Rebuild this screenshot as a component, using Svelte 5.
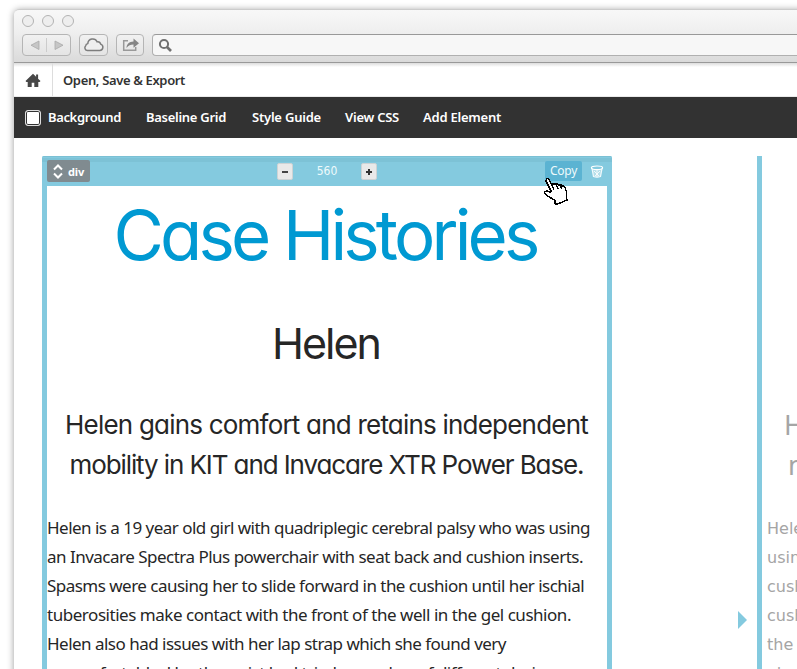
<script>
  const menu = [
    { label: 'Background', width: 73, gap: 25 },
    { label: 'Baseline Grid', width: 80, gap: 26 },
    { label: 'Style Guide', width: 69, gap: 24 },
    { label: 'View CSS', width: 54, gap: 24 },
    { label: 'Add Element', width: 78, gap: 0 }
  ];
  const intro = [
    { text: 'Helen gains comfort and retains independent', width: 523 },
    { text: 'mobility in KIT and Invacare XTR Power Base.', width: 514 }
  ];
  const story = [
    { text: 'Helen is a 19 year old girl with quadriplegic cerebral palsy who was using', width: 543 },
    { text: 'an Invacare Spectra Plus powerchair with seat back and cushion inserts.', width: 536 },
    { text: 'Spasms were causing her to slide forward in the cushion until her ischial', width: 537 },
    { text: 'tuberosities make contact with the front of the well in the gel cushion.', width: 524 },
    { text: 'Helen also had issues with her lap strap which she found very', width: 459 },
    { text: 'uncomfortable. Her therapist had tried a number of different designs', width: 516 }
  ];
  const copy = ['Helen is a 19', 'using an', 'cushion', 'cushion', 'the gel', 'also had'];

  // Tracks a line of text so that it spans the given measure.
  function fit(node, width) {
    const natural = node.getBoundingClientRect().width;
    node.style.letterSpacing = `${(width - natural) / node.textContent.length}px`;
  }
</script>

<div class="page">
  <div class="window">
    <header class="chrome">
      <div class="lights"><i></i><i></i><i></i></div>
      <div class="tools">
        <div class="btn nav">
          <svg width="47" height="20" viewBox="0 0 47 20">
            <path d="M16 6v8.5L8 10.2zM32 6v8.5l8-4.3z" fill="#c6c6c6" stroke="#a9a9a9" stroke-width=".8" />
            <path d="M23.5 3v14" stroke="#ccc" />
          </svg>
        </div>
        <div class="btn cloud">
          <svg width="27" height="20" viewBox="0 0 27 20">
            <path d="M7.500 15.500h12.300a3.300 3.300 0 0 0 .9-6.400 3.200 3.200 0 0 0-3.600-2.300 4.900 4.900 0 0 0-9.300 1.700 3 3 0 0 0-2.100 2.200 2.800 2.800 0 0 0 1.800 4.800z" fill="#eee" stroke="#7d7d7d" stroke-width="1.500" />
          </svg>
        </div>
        <div class="btn share">
          <svg width="26" height="20" viewBox="0 0 26 20">
            <path d="M11 5.700H6.700v9.600h12V12" fill="none" stroke="#999" stroke-width="1.500" />
            <path d="M9.500 13c.2-4.300 2.700-6.500 7-6.600V3.500l5.500 4.700-5.500 4.500V9.600c-3 0-5 .8-7 3.400z" fill="#858585" />
          </svg>
        </div>
        <div class="search">
          <svg width="16" height="16" viewBox="0 0 16 16">
            <circle cx="6" cy="6" r="4.100" fill="none" stroke="#707070" stroke-width="2" />
            <path d="m9 9 4 4" stroke="#707070" stroke-width="2.600" />
          </svg>
        </div>
      </div>
    </header>

    <nav class="file">
      <div class="home">
        <svg width="16" height="15" viewBox="0 0 16 15">
          <path d="M8 .8.5 8l.9.9h1.300v5h4V9.800h2.600v4.100h4v-5h1.300l.9-.9-2.400-2.300V1.500h-2v2.200z" fill="#474747" />
        </svg>
      </div>
      <span class="t open" use:fit={122}>Open, Save &amp; Export</span>
    </nav>

    <nav class="menu">
      <i class="swatch"></i>
      {#each menu as m}
        <span class="cell" style:margin-right="{m.gap}px" style:width="{m.width}px"><span class="t" use:fit={m.width}>{m.label}</span></span>
      {/each}
    </nav>

    <main>
      <section class="box">
        <div class="bar">
          <div class="tag">
            <svg width="10" height="15" viewBox="0 0 10 15">
              <path d="m1 5.500 4-4 4 4M1 9.500l4 4 4-4" fill="none" stroke="#fff" stroke-width="2" />
            </svg>
            <span class="t" use:fit={16}>div</span>
          </div>
          <div class="stepper">
            <b><svg width="6" height="6" viewBox="0 0 6 6"><path d="M0 3h6" stroke="#444" stroke-width="2" /></svg></b>
            <span>560</span>
            <b><svg width="6" height="6" viewBox="0 0 6 6"><path d="M0 3h6M3 0v6" stroke="#333" stroke-width="2" /></svg></b>
          </div>
          <div class="actions">
            <div class="copy"><span class="t" use:fit={27}>Copy</span></div>
            <svg width="14" height="13" viewBox="0 0 14 13">
              <path d="M2 3.500 3.500 11.500q3.500 1.500 7 0L12 3.500z" fill="#b5dfea" stroke="#f2fafc" stroke-width="1.200" />
              <ellipse cx="7" cy="2.800" rx="5.600" ry="1.800" fill="#84cadf" stroke="#fff" stroke-width="1.200" />
              <path d="m4 6 5 5M10 6l-5 5M7 5v7" stroke="#fff" stroke-width=".8" />
            </svg>
          </div>
          <svg class="cursor" width="26" height="31" viewBox="0 0 26 31">
            <path d="M3 5l.5-2.500h2L9 9l1.500-1.500L13 8.500 14 8l2 1 1.500-.5L19 10l1.500-.5L22 11.500l1.500 4.500v6l.5 2-10.500 4.500L12 27v-2.500l-6.500-4-4-3.500.5-1.500 2-.5 3.500 1.500.5-1.500z" fill="#fff" stroke="#000" stroke-width="1.500" shape-rendering="crispEdges" />
            <path d="m9 9 2 4.500M13 8.500l2 4.500M17 9l1.700 3.500" stroke="#000" stroke-width="1.400" shape-rendering="crispEdges" />
          </svg>
        </div>
        <h1><span class="t" use:fit={423}>Case Histories</span></h1>
        <h2><span class="t" use:fit={108}>Helen</span></h2>
        <div class="intro">
          {#each intro as l}<p><span class="t" use:fit={l.width}>{l.text}</span></p>{/each}
        </div>
        <div class="story">
          {#each story as l}<p><span class="t" use:fit={l.width}>{l.text}</span></p>{/each}
        </div>
      </section>

      <div class="arrow"></div>

      <section class="clone">
        <div class="lead"><p>Helen</p><p class="second">mobility</p></div>
        <div class="story">
          {#each copy as l}<p>{l}</p>{/each}
        </div>
      </section>
    </main>
  </div>
</div>

<style>
  .page {
    box-sizing: border-box;
    width: 797px;
    height: 669px;
    padding: 9px 0 0 14px;
    overflow: hidden;
    background: #fff;
    font-family: 'Noto Sans', 'Open Sans', sans-serif;
  }
  .window {
    display: flex;
    flex-direction: column;
    width: 800px;
    height: 690px;
    background: #fff;
    border-radius: 5px 0 0 0;
    box-shadow: 0 1px 7px rgba(0, 0, 0, .4);
  }
  .t { display: inline-block; white-space: pre; }
  p, h1, h2 { margin: 0; }
  .chrome {
    box-sizing: border-box;
    flex: none;
    height: 54px;
    padding: 6px 0 0 8px;
    border-top: 1px solid #ccc;
    border-bottom: 1px solid #999;
    border-radius: 5px 0 0 0;
    background: linear-gradient(#f8f8f8, #eee 45%, #dadada);
  }
  .lights { display: flex; gap: 8px; height: 18px; }
  .lights i {
    box-sizing: border-box;
    width: 12px;
    height: 12px;
    margin-top: -1px;
    border: 1.500px solid #b3b3b3;
    border-radius: 50%;
    background: #eee;
  }
  .tools { display: flex; align-items: flex-start; }
  .btn {
    box-sizing: border-box;
    height: 22px;
    border: 1px solid #b5b5b5;
    border-radius: 4px;
    background: linear-gradient(#f1f1f1, #e4e4e4);
  }
  .btn svg { display: block; }
  .nav { width: 49px; margin-right: 8px; }
  .cloud { width: 29px; margin-right: 8px; }
  .share { width: 28px; margin-right: 8px; }
  .search {
    box-sizing: border-box;
    flex: 1;
    height: 22px;
    padding: 3px 5px;
    border: 1px solid #b0b0b0;
    border-top-color: #999;
    border-right: 0;
    border-radius: 4px 0 0 4px;
    background: #f7f7f7;
  }
  .search svg { display: block; }
  .file {
    box-sizing: border-box;
    flex: none;
    display: flex;
    align-items: center;
    height: 34px;
    background: linear-gradient(#ddd, #fff 4px);
    border-bottom: 1px solid #ebebeb;
  }
  .home {
    box-sizing: border-box;
    display: flex;
    width: 39px;
    height: 33px;
    padding: 10px 0 0 11px;
    border-right: 1px solid #ddd;
  }
  .open { margin: 1px 0 0 10px; font-size: 13px; font-weight: 600; color: #333; }
  .menu {
    flex: none;
    display: flex;
    align-items: center;
    height: 41px;
    padding-left: 11px;
    background: #323232;
    color: #fff;
    font-size: 13px;
    font-weight: 600;
  }
  .swatch {
    box-sizing: border-box;
    width: 16px;
    height: 16px;
    margin: 0 7px 0 0;
    border: 1px solid #ddd;
    border-radius: 3px;
    background: #fff;
    box-shadow: inset 0 0 0 1px #323232;
  }
  .cell { flex: none; padding-bottom: 2px; }
  main { flex: none; display: flex; height: 560px; padding: 18px 0 0 28px; overflow: hidden; }
  .box {
    box-sizing: border-box;
    flex: none;
    width: 570px;
    height: 560px;
    border: 5px solid #84cadf;
    border-top: 0;
    border-radius: 2px 2px 0 0;
    color: #262626;
  }
  .bar {
    position: relative;
    display: flex;
    box-sizing: border-box;
    height: 30px;
    margin: 0 -5px;
    padding: 4px 8px 0 5px;
    border-radius: 2px 2px 0 0;
    background: linear-gradient(#7bc0d4 0 1px, #84cadf 1px 2px, #7dc2d6 2px 6px, #84cadf 6px);
  }
  .tag {
    display: flex;
    align-items: center;
    box-sizing: border-box;
    width: 43px;
    height: 22px;
    padding-left: 6px;
    gap: 5px;
    border-radius: 2px;
    background: #808b90;
    color: #fff;
    font-size: 11px;
    font-weight: 700;
  }
  .stepper { display: flex; align-items: center; gap: 23px; height: 22px; margin-left: 187px; color: #eefafc; font: 12px/22px 'DejaVu Sans Condensed', 'Open Sans', sans-serif; }
  .stepper span { width: 22px; text-align: center; }
  .stepper b {
    display: flex;
    align-items: center;
    justify-content: center;
    box-sizing: border-box;
    width: 16px;
    height: 17px;
    margin-top: 1px;
    border: 1px solid #cdd3d5;
    border-radius: 2px;
    background: #e9e9e9;
  }
  .actions { display: flex; gap: 8px; margin-left: auto; }
  .actions > svg { margin-top: 5px; }
  .copy { width: 37px; height: 20px; margin-top: 1px; border-radius: 2px; background: #5bb3d2; color: #eefafc; font-size: 12px; line-height: 20px; text-align: center; }
  .cursor { position: absolute; left: 501px; top: 20px; z-index: 2; }
  h1, h2, .intro { font-family: Inter, sans-serif; font-weight: 400; font-feature-settings: 'cv11' 1; text-align: center; }
  h1 { height: 96px; padding-right: 4px; line-height: 98px; font-size: 69px; color: #0099d2; white-space: nowrap; }
  h2 { height: 122px; padding-right: 2px; line-height: 122px; font-size: 43px; }
  .intro { height: 108px; padding: 1px 1px 0 0; font-size: 26px; line-height: 40px; white-space: nowrap; }
  .story { font-size: 17px; line-height: 29px; white-space: nowrap; }
  .story p { height: 29px; }
  .intro p { height: 40px; }
  .arrow { flex: none; width: 0; height: 0; margin: 455px 10px 0 126px; border: 9px solid transparent; border-left: 9px solid #84cadf; border-right: 0; }
  .clone { box-sizing: border-box; flex: none; width: 400px; height: 560px; padding: 249px 0 0 5px; border-left: 5px solid #84cadf; color: #a5a5a5; }
  .lead { height: 109px; padding-left: 17px; font: 27px/40px 'Noto Sans', sans-serif; }
  .second { padding-left: 4px; }
  .clone .story { font-family: 'DejaVu Sans', sans-serif; font-size: 16px; }
</style>
